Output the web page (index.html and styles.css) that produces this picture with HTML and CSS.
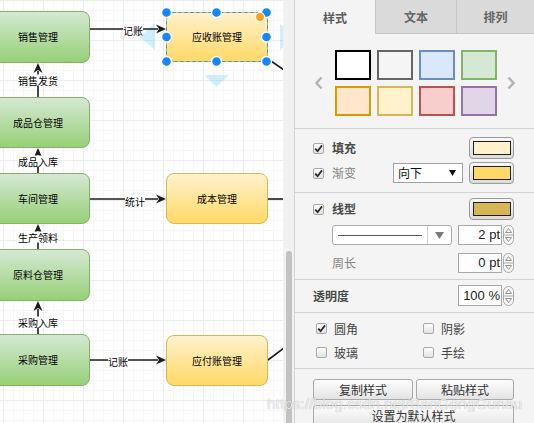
FILE: index.html
```html
<!DOCTYPE html>
<html lang="zh">
<head>
<meta charset="utf-8">
<title>样式</title>
<link rel="stylesheet" href="styles.css">
</head>
<body>
<div class="app">
  <div class="canvas">
    <svg class="layer" width="283" height="423" viewBox="0 0 283 423">
      <g class="hover">
        <path d="M140 37 L155 23 L155 50 Z"/>
        <path d="M204 75 L229 75 L216.5 87 Z"/>
        <path d="M280 24 L280 50 L294 37 Z"/>
      </g>
      <g class="lines">
        <path d="M90 29 H158"/>
        <path d="M38 97 V71"/>
        <path d="M38 173 V156"/>
        <path d="M38 249 V232"/>
        <path d="M38 334 V309"/>
        <path d="M90 199 H158"/>
        <path d="M90 360 H158"/>
        <path d="M268 59 L284 70"/>
        <path d="M268 199 H284"/>
        <path d="M268 360 L284 348"/>
      </g>
      <g class="heads">
        <path d="M166 29 L156 24.5 L159 29 L156 33.5 Z"/>
        <path d="M166 199 L156 194.5 L159 199 L156 203.5 Z"/>
        <path d="M166 360 L156 355.5 L159 360 L156 364.5 Z"/>
        <path d="M38 63 L33.5 73 L38 70 L42.5 73 Z"/>
        <path d="M38 148 L33.5 158 L38 155 L42.5 158 Z"/>
        <path d="M38 224 L33.5 234 L38 231 L42.5 234 Z"/>
        <path d="M38 301 L33.5 311 L38 308 L42.5 311 Z"/>
      </g>
    </svg>

    <div class="node green n1">销售管理</div>
    <div class="node green n2">成品仓管理</div>
    <div class="node green n3">车间管理</div>
    <div class="node green n4">原料仓管理</div>
    <div class="node green n5">采购管理</div>
    <div class="node yellow y1">应收账管理</div>
    <div class="node yellow y2">成本管理</div>
    <div class="node yellow y3">应付账管理</div>

    <span class="elabel l1">记账</span>
    <span class="elabel l2">销售发货</span>
    <span class="elabel l3">成品入库</span>
    <span class="elabel l4">统计</span>
    <span class="elabel l5">生产领料</span>
    <span class="elabel l6">采购入库</span>
    <span class="elabel l7">记账</span>

    <svg class="layer" width="283" height="423" viewBox="0 0 283 423">
      <rect x="166.5" y="12.5" width="101" height="49" fill="none" stroke="#1b9cf0" stroke-width="1" stroke-dasharray="3 3"/>
      <g class="handles">
        <circle cx="166.5" cy="12.5" r="5"/>
        <circle cx="216.5" cy="12.5" r="5"/>
        <circle cx="266.5" cy="12.5" r="5"/>
        <circle cx="166.5" cy="37" r="5"/>
        <circle cx="266.5" cy="37" r="5"/>
        <circle cx="166.5" cy="61.5" r="5"/>
        <circle cx="216.5" cy="61.5" r="5"/>
        <circle cx="266.5" cy="61.5" r="5"/>
      </g>
      <circle cx="260" cy="17" r="4.5" fill="#f7a11a" stroke="#ffffff" stroke-width="1.2"/>
    </svg>
  </div>

  <div class="vscroll"><div class="thumb"></div></div>

  <div class="panel">
    <div class="tabs">
      <div class="tab active">样式</div>
      <div class="tab t2">文本</div>
      <div class="tab t3">排列</div>
    </div>

    <div class="sec swatches">
      <svg class="chev" width="8" height="14" viewBox="0 0 8 14"><path d="M6.5 1.5 L1.5 7 L6.5 12.5" /></svg>
      <div class="sw-grid">
        <span class="sw s1"></span>
        <span class="sw s2"></span>
        <span class="sw s3"></span>
        <span class="sw s4"></span>
        <span class="sw s5"></span>
        <span class="sw s6"></span>
        <span class="sw s7"></span>
        <span class="sw s8"></span>
      </div>
      <svg class="chev" width="8" height="14" viewBox="0 0 8 14"><path d="M1.5 1.5 L6.5 7 L1.5 12.5" /></svg>
    </div>

    <div class="sec fill">
      <div class="row">
        <span class="cb on"><svg width="9" height="9" viewBox="0 0 9 9"><path d="M1.2 4.6 L3.6 7.2 L8 1.4"/></svg></span>
        <span class="lbl bold">填充</span>
        <span class="cbtn"><span class="ci c-fill"></span></span>
      </div>
      <div class="row gap3">
        <span class="cb on"><svg width="9" height="9" viewBox="0 0 9 9"><path d="M1.2 4.6 L3.6 7.2 L8 1.4"/></svg></span>
        <span class="lbl dim">渐变</span>
        <span class="select">向下<svg class="sel-arr" width="7" height="6" viewBox="0 0 7 6"><path d="M0 0 H7 L3.5 6 Z"/></svg></span>
        <span class="cbtn"><span class="ci c-grad"></span></span>
      </div>
    </div>

    <div class="sec line">
      <div class="row">
        <span class="cb on"><svg width="9" height="9" viewBox="0 0 9 9"><path d="M1.2 4.6 L3.6 7.2 L8 1.4"/></svg></span>
        <span class="lbl bold">线型</span>
        <span class="cbtn"><span class="ci c-line"></span></span>
      </div>
      <div class="row r20 indent mt5">
        <span class="linesel"><span class="ls-line"><i></i></span><span class="ls-arr"><svg width="9" height="7" viewBox="0 0 9 7"><path d="M0 0 H9 L4.5 7 Z"/></svg></span></span>
        <span class="num">2 pt</span>
        <svg class="spin" width="11" height="20" viewBox="0 0 11 20"><rect x="0.5" y="0.5" width="10" height="19" rx="5" /><line x1="0.5" y1="10" x2="10.5" y2="10"/><path d="M2.5 7.5 L5.5 3.5 L8.5 7.5 Z"/><path d="M2.5 12.5 L5.5 16.5 L8.5 12.5 Z"/></svg>
      </div>
      <div class="row r20 indent mt8">
        <span class="lbl dim">周长</span>
        <span class="num">0 pt</span>
        <svg class="spin" width="11" height="20" viewBox="0 0 11 20"><rect x="0.5" y="0.5" width="10" height="19" rx="5" /><line x1="0.5" y1="10" x2="10.5" y2="10"/><path d="M2.5 7.5 L5.5 3.5 L8.5 7.5 Z"/><path d="M2.5 12.5 L5.5 16.5 L8.5 12.5 Z"/></svg>
      </div>
    </div>

    <div class="sec opacity">
      <div class="row r21">
        <span class="lbl bold">透明度</span>
        <span class="num h21">100 %</span>
        <svg class="spin" width="11" height="20" viewBox="0 0 11 20"><rect x="0.5" y="0.5" width="10" height="19" rx="5" /><line x1="0.5" y1="10" x2="10.5" y2="10"/><path d="M2.5 7.5 L5.5 3.5 L8.5 7.5 Z"/><path d="M2.5 12.5 L5.5 16.5 L8.5 12.5 Z"/></svg>
      </div>
    </div>

    <div class="sec opts">
      <label class="opt"><span class="cb on"><svg width="9" height="9" viewBox="0 0 9 9"><path d="M1.2 4.6 L3.6 7.2 L8 1.4"/></svg></span>圆角</label>
      <label class="opt"><span class="cb"></span>阴影</label>
      <label class="opt"><span class="cb"></span>玻璃</label>
      <label class="opt"><span class="cb"></span>手绘</label>
    </div>

    <div class="btns">
      <div class="btn-row">
        <span class="btn w100">复制样式</span>
        <span class="btn w98">粘贴样式</span>
      </div>
      <span class="btn wide">设置为默认样式</span>
    </div>
  </div>

  <div class="watermark">https://blog.csdn.net/BanGongGunau</div>
</div>
</body>
</html>
```

FILE: styles.css
```css
* { box-sizing: border-box; margin: 0; padding: 0; }
html, body { width: 534px; height: 423px; overflow: hidden; }
body {
  font-family: "Noto Sans CJK SC", "Noto Sans", sans-serif;
  font-size: 12px;
  color: #333;
  background: #fff;
}
.app { display: flex; width: 534px; height: 423px; position: relative; overflow: hidden; }

/* ---------- canvas ---------- */
.canvas {
  position: relative;
  flex: 0 0 283px;
  height: 423px;
  overflow: hidden;
  background-color: #fff;
  background-image:
    linear-gradient(90deg, #ececec 1px, transparent 1px),
    linear-gradient(#ececec 1px, transparent 1px),
    linear-gradient(90deg, #f6f6f6 1px, transparent 1px),
    linear-gradient(#f6f6f6 1px, transparent 1px);
  background-size: 40px 40px, 40px 40px, 10px 10px, 10px 10px;
  background-position: 3px 0, 0 0, 3px 0, 0 0;
}
.layer { position: absolute; left: 0; top: 0; }
.hover path { fill: #29b6f2; fill-opacity: 0.22; }
.lines path { stroke: #1c1c1c; stroke-width: 1.6; fill: none; }
.heads path { fill: #1c1c1c; }
.handles circle { fill: #1785fb; stroke: #ffffff; stroke-width: 1.4; }

.node {
  position: absolute;
  display: flex;
  align-items: center;
  justify-content: center;
  border-radius: 8px;
  font-size: 10px;
  line-height: 12px;
  color: #000;
}
.green {
  left: -14px;
  width: 104px;
  border: 1px solid #82b366;
  background: linear-gradient(#d5e8d4, #97d077);
}
.yellow {
  left: 166px;
  width: 102px;
  border: 1px solid #d6b656;
  background: linear-gradient(#fff2cc, #ffd966);
}
.n1 { top: 11px; height: 52px; }
.n2 { top: 97px; height: 51px; }
.n3 { top: 173px; height: 51px; }
.n4 { top: 249px; height: 52px; }
.n5 { top: 334px; height: 52px; }
.y1 { top: 12px; height: 50px; }
.y2 { top: 173px; height: 51px; }
.y3 { top: 335px; height: 51px; }

.elabel {
  position: absolute;
  background: #fff;
  font-size: 10px;
  line-height: 11px;
  color: #000;
  white-space: nowrap;
  transform: translate(-50%, -50%);
}
.l1 { left: 133px; top: 30px; }
.l2 { left: 38px; top: 80px; }
.l3 { left: 38px; top: 161px; }
.l4 { left: 135px; top: 201px; }
.l5 { left: 38px; top: 237px; }
.l6 { left: 38px; top: 322px; }
.l7 { left: 118px; top: 361px; }

/* ---------- scrollbar ---------- */
.vscroll {
  flex: 0 0 11px;
  background: #f1f1f1;
  padding: 251px 0 0 3px;
}
.thumb { width: 6px; height: 200px; background: #c2c2c2; border-radius: 3px; }

/* ---------- panel ---------- */
.panel {
  flex: 1;
  background: #f4f4f4;
  border-left: 1px solid #d3d3d3;
  display: flex;
  flex-direction: column;
}
.tabs { display: flex; height: 34px; flex: none; }
.tab {
  display: flex;
  align-items: center;
  justify-content: center;
  font-weight: bold;
  font-size: 12px;
  color: #666;
  background: #dadada;
  border-left: 1px solid #c6c6c6;
  border-bottom: 1px solid #c6c6c6;
}
.tab.active { width: 80px; background: transparent; border: none; color: #5c5c5c; }
.t2 { width: 81px; }
.t3 { width: 78px; }

.sec { flex: none; border-bottom: 1px solid #d2d2d2; }

.swatches {
  height: 95px;
  display: flex;
  align-items: center;
  padding: 16px 0 12px 20px;
}
.chev path { fill: none; stroke: #b3b3b3; stroke-width: 2.4; }
.sw-grid {
  display: grid;
  grid-template-columns: repeat(4, 36px);
  grid-auto-rows: 30px;
  gap: 6px;
  margin: 0 10px 0 12px;
}
.sw { border: 2px solid; }
.s1 { background: #ffffff; border-color: #000000; }
.s2 { background: #f5f5f5; border-color: #666666; }
.s3 { background: #dae8fc; border-color: #6c8ebf; }
.s4 { background: #d5e8d4; border-color: #82b366; }
.s5 { background: #ffe6cc; border-color: #d79b00; }
.s6 { background: #fff2cc; border-color: #d6b656; }
.s7 { background: #f8cecc; border-color: #b85450; }
.s8 { background: #e1d5e7; border-color: #9673a6; }

.row { display: flex; align-items: center; height: 22px; }
.gap3 { margin-top: 3px; }
.mt5 { margin-top: 5px; }
.mt8 { margin-top: 8px; }
.r20 { height: 20px; }
.r21 { height: 21px; }
.indent { padding-left: 19px; }

.fill { padding: 8px 20px 8px 18px; }
.line { padding: 5px 20px 6px 18px; }
.opacity { padding: 5px 20px 6px 18px; }

.cb {
  flex: none;
  width: 11px;
  height: 11px;
  margin-right: 8px;
  border: 1px solid #a9a9a9;
  border-radius: 2px;
  background: linear-gradient(#fdfdfd, #e2e2e2);
  display: flex;
  align-items: center;
  justify-content: center;
}
.cb path { fill: none; stroke: #2a2a2a; stroke-width: 1.8; }
.lbl { flex: 1; font-size: 12px; line-height: 16px; }
.bold { font-weight: bold; color: #4a4a4a; }
.dim { color: #858585; }

.cbtn {
  flex: none;
  width: 45px;
  height: 22px;
  border: 1px solid #9a9a9a;
  border-radius: 4px;
  background: linear-gradient(#f8f8f8, #dcdcdc);
  display: flex;
  align-items: center;
  justify-content: center;
}
.ci { width: 38px; height: 14px; border: 1px solid #1e1e1e; }
.c-fill { background: #fff2cc; }
.c-grad { background: #ffd966; }
.c-line { background: #d6b656; }

.select {
  flex: none;
  width: 70px;
  height: 20px;
  margin-right: 6px;
  border: 1px solid #a2a2a2;
  background: #fff;
  color: #111;
  font-size: 12px;
  line-height: 18px;
  padding-left: 4px;
  display: flex;
  align-items: center;
  justify-content: space-between;
  padding-right: 6px;
}
.sel-arr path { fill: #111; }

.linesel {
  flex: none;
  width: 120px;
  height: 20px;
  margin-right: 6px;
  border: 1px solid #ababab;
  border-radius: 3px;
  background: #fff;
  display: flex;
}
.ls-line { flex: 1; display: flex; align-items: center; padding: 0 5px 0 5px; }
.ls-line i { display: block; width: 100%; border-top: 1px solid #555; }
.ls-arr {
  flex: none;
  width: 24px;
  border-left: 1px solid #cfcfcf;
  display: flex;
  align-items: center;
  justify-content: center;
}
.ls-arr path { fill: #7a7a7a; }

.num {
  flex: none;
  width: 44px;
  height: 20px;
  margin-right: 1px;
  border: 1px solid #a8a8a8;
  background: #fff;
  font-family: "Liberation Sans", Arial, sans-serif;
  font-size: 13px;
  line-height: 18px;
  color: #222;
  text-align: right;
  padding-right: 1px;
}
.h21 { height: 21px; line-height: 19px; }
.spin { flex: none; }
.spin rect { fill: #f8f8f8; stroke: #a8a8a8; }
.spin line { stroke: #a8a8a8; }
.spin path { fill: none; stroke: #8a8a8a; stroke-width: 0.9; }

.opts {
  display: grid;
  grid-template-columns: 107px auto;
  grid-auto-rows: 16px;
  row-gap: 8px;
  padding: 7px 0 8px 21px;
}
.opt {
  display: flex;
  align-items: center;
  font-size: 12px;
  color: #444;
}
.opt .cb { margin-right: 7px; }

.btns {
  flex: none;
  padding: 10px 20px 0 18px;
  display: flex;
  flex-direction: column;
  gap: 5px;
}
.btn-row { display: flex; gap: 3px; }
.btn {
  height: 21px;
  border: 1px solid #a9a9a9;
  border-radius: 3px;
  background: linear-gradient(#fdfdfd, #e4e4e4);
  font-size: 12px;
  line-height: 19px;
  color: #333;
  text-align: center;
}
.w100 { width: 100px; }
.w98 { width: 98px; }
.wide { width: 201px; height: 23px; }

.watermark {
  position: absolute;
  left: 267px;
  top: 396px;
  font-family: "Liberation Sans", Arial, sans-serif;
  font-size: 15.5px;
  line-height: 16px;
  color: rgba(255, 255, 255, 0.78);
  text-shadow: 0 0 1px rgba(0, 0, 0, 0.35);
  white-space: nowrap;
  pointer-events: none;
}
```
